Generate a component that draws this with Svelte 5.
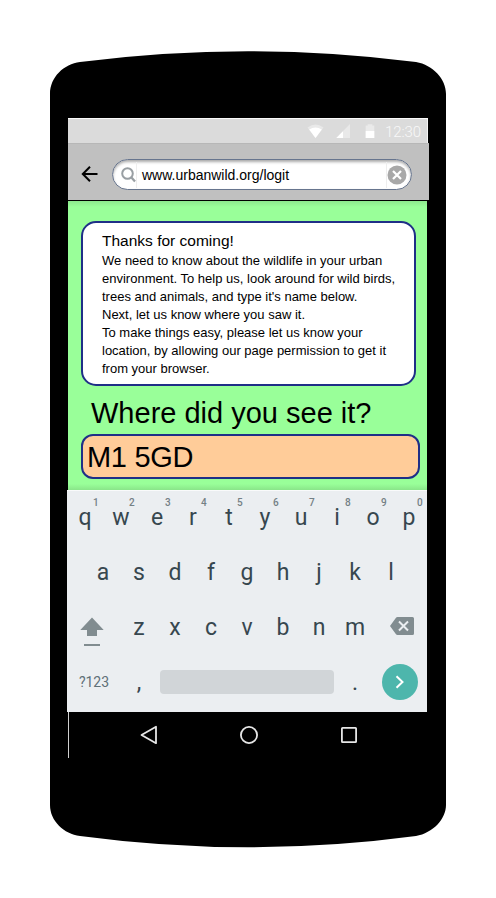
<script>
  const top = ['q', 'w', 'e', 'r', 't', 'y', 'u', 'i', 'o', 'p'];
  const home = ['a', 's', 'd', 'f', 'g', 'h', 'j', 'k', 'l'];
  const lower = ['z', 'x', 'c', 'v', 'b', 'n', 'm'];
  const about = [
    'We need to know about the wildlife in your urban',
    'environment. To help us, look around for wild birds,',
    "trees and animals, and type it's name below.",
    'Next, let us know where you saw it.',
    'To make things easy, please let us know your',
    'location, by allowing our page permission to get it',
    'from your browser.'
  ];
</script>

<main class="stage">
  <div class="phone">
    <svg class="shell" viewBox="0 0 396 797" width="396" height="797" aria-hidden="true">
      <path d="M0 43C0 26 14 13 30 11Q198 -10.5 366 11C383 14 396 28 396 43V754C396 768 383 782 366 785Q198 807.500 30 785C14 783 0 770 0 754Z" />
    </svg>
    <div class="screen">
      <div class="status">
        <svg width="44" height="24" viewBox="0 0 44 24">
          <path d="M-.5 6.500Q7.500 .5 15.500 6.500L7.500 17Z" fill="#e9e9e9" />
          <path d="M1.200 8.500Q7.500 4.300 13.800 8.500L7.500 17Z" fill="#fff" />
          <path d="M28.300 17L42 3V17Z" fill="#e9e9e9" />
          <path d="M28.300 17L35 10.300V17Z" fill="#fff" />
        </svg>
        <svg class="battery" width="10" height="24" viewBox="0 0 10 24">
          <path d="M.7 4.500h2V3.300h4.600V4.500h2V17H.7z" fill="#eaeaea" />
          <path d="M.7 10h8.600v7H.7z" fill="#fff" />
        </svg>
        <span class="clock">12:30</span>
      </div>
      <div class="toolbar">
        <svg class="back" width="18" height="18" viewBox="0 0 18 18" fill="none" stroke="#000" stroke-width="2">
          <path d="M16.500 9H2M9 1.800L1.800 9L9 16.200" />
        </svg>
        <div class="address">
          <div class="cap left">
            <svg width="15" height="16" viewBox="0 0 15 16" fill="none" stroke="#999fa3" stroke-width="2">
              <circle cx="6.500" cy="6.500" r="5.300" />
              <path d="M10 10L14 14.500" stroke-width="2.300" />
            </svg>
          </div>
          <span class="url">www.urbanwild.org/logit</span>
          <div class="cap right">
            <svg width="20" height="20" viewBox="0 0 20 20">
              <circle cx="10" cy="10" r="9.500" fill="#a8a8a8" />
              <path d="M6 6L14 14M14 6L6 14" stroke="#fff" stroke-width="2.200" />
            </svg>
          </div>
        </div>
      </div>
      <div class="page">
        <section class="card">
          <h1>Thanks for coming!</h1>
          {#each about as line}<p>{line}</p>{/each}
        </section>
        <h2>Where did you see it?</h2>
        <div class="field">M1 5GD</div>
      </div>
      <div class="keyboard">
        <div class="row">
          {#each top as k, i}
            <span class="key">{k}<sup>{(i + 1) % 10}</sup></span>
          {/each}
        </div>
        <div class="row">
          {#each home as k}<span class="key">{k}</span>{/each}
        </div>
        <div class="row">
          <span class="shift">
            <svg width="24" height="30" viewBox="0 0 24 30" fill="#818c90">
              <path d="M12 .5L23.700 13H17V19H7V13H.3Z" />
              <path d="M4 27h16v2H4z" />
            </svg>
          </span>
          {#each lower as k}<span class="key">{k}</span>{/each}
          <span class="delete">
            <svg width="24" height="18" viewBox="0 0 24 18">
              <path d="M7.500 0H22.500Q24 0 24 1.500V16.500Q24 18 22.500 18H7.500Q6.500 18 5.800 17L0 9L5.800 1Q6.500 0 7.500 0Z" fill="#818c90" />
              <path d="M9 4.500L18 13.500M18 4.500L9 13.500" stroke="#ebeef1" stroke-width="2" />
            </svg>
          </span>
        </div>
        <div class="row bottom">
          <span class="symbols">?123</span>
          <span class="key">,</span>
          <span class="space"></span>
          <span class="key dot">.</span>
          <span class="go">
            <svg width="10" height="14" viewBox="0 0 10 14" fill="none" stroke="#fff" stroke-width="2">
              <path d="M1.500 1.200L7.500 7L1.500 12.800" />
            </svg>
          </span>
        </div>
      </div>
      <div class="nav">
        <svg width="18" height="20" viewBox="0 0 18 20" fill="none" stroke="#e6e6e6" stroke-width="1.800" stroke-linejoin="round">
          <path d="M16 1.800V18.200L1.500 10Z" />
        </svg>
        <svg width="20" height="20" viewBox="0 0 20 20" fill="none" stroke="#e6e6e6" stroke-width="1.800">
          <circle cx="10" cy="10" r="8.100" />
        </svg>
        <svg width="18" height="20" viewBox="0 0 18 20" fill="none" stroke="#e6e6e6" stroke-width="1.800">
          <rect x="1.900" y="2.900" width="14.200" height="14.200" rx=".6" />
        </svg>
      </div>
    </div>
  </div>
</main>

<style>
  :global(body) { margin: 0; background: #fff; }
  .stage { box-sizing: border-box; width: 496px; height: 898px; padding: 51px 50px 0; font-family: "Liberation Sans", Arial, sans-serif; color: #000; }
  .phone { position: relative; box-sizing: border-box; width: 396px; height: 797px; padding: 67px 0 0 17px; }
  .shell { position: absolute; left: 0; top: 0; }
  svg { display: block; overflow: visible; }
  .screen { position: relative; width: 362px; display: flex; flex-direction: column; }
  .status { box-sizing: border-box; height: 25px; width: 360px; margin-left: 1px; padding-left: 240px; display: flex; align-items: center; background: #dbdbdb; border-top: 1px solid #fafafa; border-right: 1px solid #f4f4f4; }
  .status svg { padding-top: 4px; box-sizing: content-box; height: 24px; flex: none; }
  .battery { margin-left: 13px; }
  .clock { margin-left: 10px; padding-top: 2px; font: 300 15px/20px Roboto, sans-serif; color: #f8f8f8; letter-spacing: -.1px; }
  .toolbar { box-sizing: border-box; width: 361px; height: 58px; margin-left: 1px; padding: 16px 0 0 13px; display: flex; background: #c0c0c0; border-top: 1px solid #b7b7b7; border-bottom: 1px solid #000; }
  .back { margin-top: 5px; }
  .address { box-sizing: border-box; margin-left: 13px; margin-top: -1px; width: 300px; height: 31px; border: 1.500px solid #67758e; border-radius: 16px; background: #fff; box-shadow: inset 0 2px 3px #aaa; display: flex; align-items: center; }
  .cap { height: 26px; display: flex; align-items: center; }
  .left { width: 24px; justify-content: flex-end; border-right: 1px solid #eee; box-sizing: border-box; }
  .url { flex: 1; padding-left: 5px; font-size: 14px; line-height: 20px; white-space: nowrap; }
  .right { width: 25px; box-sizing: border-box; border-left: 1px solid #eee; }
  .page { box-sizing: border-box; width: 359px; height: 289px; margin-left: 1px; padding: 20px 0 0 13px; background: linear-gradient(#8de98d 0, #99ff99 6px, #99ff99 283px, #8ae58a 289px); }
  .card { box-sizing: border-box; width: 335px; height: 165px; padding: 9px 0 0 19px; border: 2px solid #1f2f87; border-radius: 15px; background: #fff; }
  h1, h2, p { margin: 0; font-weight: 400; white-space: nowrap; }
  h1 { font-size: 15.500px; line-height: 18px; padding-bottom: 2px; }
  p { font-size: 13px; line-height: 18px; }
  h2 { padding: 10px 0 0 10px; font-size: 29px; line-height: 34px; height: 38px; }
  .field { box-sizing: border-box; width: 339px; height: 45px; padding-left: 4px; border: 2px solid #1f2f87; border-radius: 12px; background: #ffcc99; font-size: 29px; line-height: 42px; letter-spacing: -.3px; }
  .keyboard { box-sizing: border-box; width: 360px; height: 222px; border-top: 1px solid #f9fafb; background: #ebeef1; font-family: Roboto, sans-serif; color: #37474f; }
  .row { height: 55px; display: flex; justify-content: center; }
  .key { position: relative; width: 36px; text-align: center; font-size: 23px; line-height: 53px; }
  sup { position: absolute; left: 26px; top: 7px; font-size: 10px; line-height: 10px; font-weight: 500; color: #748085; }
  .shift { width: 54px; display: flex; justify-content: center; padding: 16px 0 0; box-sizing: border-box; }
  .shift svg { margin-right: 4px; }
  .delete { box-sizing: border-box; width: 54px; padding: 16px 0 0 17px; }
  .bottom { justify-content: flex-start; }
  .symbols { width: 54px; font-size: 14px; line-height: 53px; text-align: center; color: #607078; }
  .space { width: 174px; height: 24px; margin: 14px 0 0 3px; border-radius: 4px; background: #d1d5d8; }
  .dot { margin-left: 3px; }
  .go { box-sizing: border-box; width: 36px; height: 36px; margin: 8px 0 0 9px; display: flex; align-items: center; justify-content: center; border-radius: 50%; background: #4db6ac; }
  .nav { box-sizing: border-box; height: 46px; margin-left: 1px; width: 360px; border-left: 1px solid #d0d0d0; padding: 13px 0 0 71px; display: flex; gap: 81px; }
</style>
